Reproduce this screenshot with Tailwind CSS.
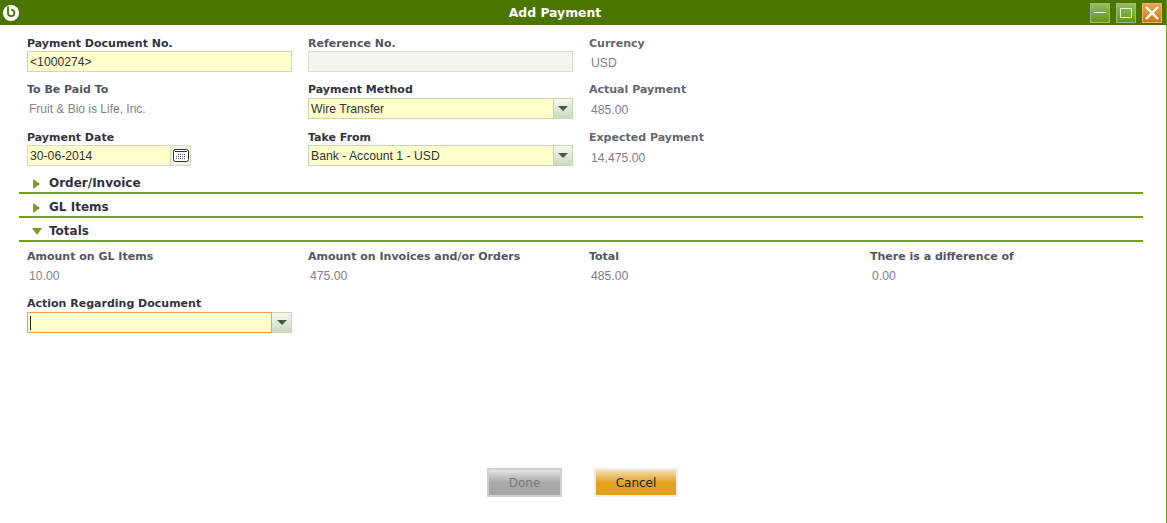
<!DOCTYPE html>
<html lang="en">
<head>
<meta charset="UTF-8">
<title>Add Payment</title>
<script src="https://cdn.jsdelivr.net/npm/@tailwindcss/browser@4"></script>
</head>
<body class="bg-white font-['Liberation_Sans',sans-serif] overflow-hidden">
<div class="w-[1167px] h-[523px] flex flex-col border-r border-[#6fa512]">
  <!-- title bar -->
  <div class="h-[25px] bg-[#4b7401] flex items-center pl-[3px] pr-[4px]">
    <svg width="16" height="16" viewBox="0 0 16 16" class="shrink-0">
      <circle cx="8" cy="8" r="8" fill="#fff"/>
      <path d="M5 1.5V8a3.2 3.2 0 1 0 3.2-3.2" fill="none" stroke="#4b7401" stroke-width="1.8"/>
    </svg>
    <div class="flex-1 text-center text-white font-['DejaVu_Sans',sans-serif] font-bold text-[12.4px] pl-[1px] pt-[2px]">Add Payment</div>
    <div class="flex gap-[6px]">
      <div class="w-[20px] h-[20px] border border-[#9db97a] bg-gradient-to-b from-[#93bd55] to-[#5f9a10] flex items-center justify-center">
        <div class="w-[12px] h-[1px] bg-white/90"></div>
      </div>
      <div class="w-[20px] h-[20px] border border-[#9db97a] bg-gradient-to-b from-[#93bd55] to-[#5f9a10] flex items-center justify-center">
        <div class="w-[12px] h-[10px] border border-white/80"></div>
      </div>
      <div class="w-[20px] h-[20px] border border-[#f0b25e] bg-gradient-to-b from-[#eda450] to-[#c9780f] flex items-center justify-center">
        <svg width="16" height="16" viewBox="0 0 16 16"><path d="M2 2l12 12M14 2L2 14" stroke="#fff" stroke-width="2.4" fill="none"/></svg>
      </div>
    </div>
  </div>

  <!-- form -->
  <div class="grid grid-cols-[281px_281px_281px] pl-[27px] pt-[12px] font-['DejaVu_Sans',sans-serif]">
    <div class="h-[46px]">
      <div class="text-[11px] leading-[13px] font-bold text-[#333340]">Payment Document No.</div>
      <div class="mt-[1px] w-[265px] h-[21px] bg-[#ffffcc] border border-[#d3d7b4] pl-[2px] text-[12.2px] leading-[21px] text-[#333] font-['Liberation_Sans',sans-serif]">&lt;1000274&gt;</div>
    </div>
    <div class="h-[46px]">
      <div class="text-[11px] leading-[13px] font-bold text-[#555560]">Reference No.</div>
      <div class="mt-[1px] w-[265px] h-[21px] bg-[#f3f5ee] border border-[#d5dccb]"></div>
    </div>
    <div class="h-[46px]">
      <div class="text-[11px] leading-[13px] font-bold text-[#666670]">Currency</div>
      <div class="mt-[6px] pl-[2px] text-[12.2px] leading-[14px] text-[#808088] font-['Liberation_Sans',sans-serif]">USD</div>
    </div>

    <div class="h-[48px]">
      <div class="text-[11px] leading-[13px] font-bold text-[#555560]">To Be Paid To</div>
      <div class="mt-[6px] pl-[2px] text-[12px] leading-[14px] text-[#808088] font-['Liberation_Sans',sans-serif]">Fruit &amp; Bio is Life, Inc.</div>
    </div>
    <div class="h-[48px]">
      <div class="text-[11px] leading-[13px] font-bold text-[#333340]">Payment Method</div>
      <div class="mt-[2px] w-[265px] h-[21px] flex bg-[#ffffcc] border border-[#c5dcaa]">
        <div class="flex-1 pl-[2px] text-[12.2px] leading-[21px] text-[#333] font-['Liberation_Sans',sans-serif]">Wire Transfer</div>
        <div class="w-[19px] border-l border-[#c5dcaa] bg-gradient-to-b from-[#f4f7ef] to-[#ccd9c1] flex items-center justify-center">
          <div class="w-0 h-0 border-x-[5px] border-x-transparent border-t-[5px] border-t-[#4a5a48]"></div>
        </div>
      </div>
    </div>
    <div class="h-[48px]">
      <div class="text-[11px] leading-[13px] font-bold text-[#666670]">Actual Payment</div>
      <div class="mt-[7px] pl-[2px] text-[12.2px] leading-[14px] text-[#808088] font-['Liberation_Sans',sans-serif]">485.00</div>
    </div>

    <div class="h-[39px]">
      <div class="text-[11px] leading-[13px] font-bold text-[#333340]">Payment Date</div>
      <div class="mt-[1px] flex h-[21px] w-[164px]">
        <div class="w-[144px] bg-[#ffffcc] border border-[#d3ddb8] pl-[2px] text-[12.2px] leading-[21px] text-[#333] font-['Liberation_Sans',sans-serif]">30-06-2014</div>
        <div class="w-[20px] border border-l-0 border-[#d3ddc2] bg-[#eef2e8] flex items-center justify-center">
          <svg width="16" height="13" viewBox="0 0 16 13">
            <rect x=".5" y=".5" width="15" height="12" rx="2" fill="#fff" stroke="#333"/>
            <path d="M2 2.5h12" stroke="#333"/>
            <path d="M5 5.5h8M3 7.5h10M3 9.5h10" stroke="#555" stroke-dasharray="1 1"/>
          </svg>
        </div>
      </div>
    </div>
    <div class="h-[39px]">
      <div class="text-[11px] leading-[13px] font-bold text-[#333340]">Take From</div>
      <div class="mt-[1px] w-[265px] h-[21px] flex bg-[#ffffcc] border border-[#c5dcaa]">
        <div class="flex-1 pl-[2px] text-[12.2px] leading-[21px] text-[#333] font-['Liberation_Sans',sans-serif]">Bank - Account 1 - USD</div>
        <div class="w-[19px] border-l border-[#c5dcaa] bg-gradient-to-b from-[#f4f7ef] to-[#ccd9c1] flex items-center justify-center">
          <div class="w-0 h-0 border-x-[5px] border-x-transparent border-t-[5px] border-t-[#4a5a48]"></div>
        </div>
      </div>
    </div>
    <div class="h-[39px]">
      <div class="text-[11px] leading-[13px] font-bold text-[#666670]">Expected Payment</div>
      <div class="mt-[7px] pl-[2px] text-[12.2px] leading-[14px] text-[#808088] font-['Liberation_Sans',sans-serif]">14,475.00</div>
    </div>
  </div>

  <!-- collapsible sections -->
  <div class="ml-[19px] w-[1124px] font-['DejaVu_Sans',sans-serif]">
    <div class="h-[24px] border-b-2 border-[#6fa512] flex items-center gap-[9px] pl-[14px] pt-[4px]">
      <div class="w-0 h-0 border-y-[5.5px] border-y-transparent border-l-[7px] border-l-[#6fa512] mt-[1px]"></div>
      <span class="text-[12px] font-bold text-[#333340]">Order/Invoice</span>
    </div>
    <div class="h-[24px] border-b-2 border-[#6fa512] flex items-center gap-[9px] pl-[14px] pt-[4px]">
      <div class="w-0 h-0 border-y-[5.5px] border-y-transparent border-l-[7px] border-l-[#6fa512] mt-[1px]"></div>
      <span class="text-[12px] font-bold text-[#333340]">GL Items</span>
    </div>
    <div class="h-[24px] border-b-2 border-[#6fa512] flex items-center gap-[7px] pl-[13px] pt-[4px]">
      <div class="w-0 h-0 border-x-[5.5px] border-x-transparent border-t-[7px] border-t-[#6fa512] mt-[1px]"></div>
      <span class="text-[12px] font-bold text-[#333340]">Totals</span>
    </div>
  </div>

  <!-- totals -->
  <div class="grid grid-cols-[281px_281px_281px_281px] pl-[27px] pt-[8px] font-['DejaVu_Sans',sans-serif]">
    <div class="h-[47px]">
      <div class="text-[11px] leading-[13px] font-bold text-[#555560]">Amount on GL Items</div>
      <div class="mt-[6px] pl-[2px] text-[12.2px] leading-[14px] text-[#808088] font-['Liberation_Sans',sans-serif]">10.00</div>
    </div>
    <div class="h-[47px]">
      <div class="text-[11px] leading-[13px] font-bold text-[#555560]">Amount on Invoices and/or Orders</div>
      <div class="mt-[6px] pl-[2px] text-[12.2px] leading-[14px] text-[#808088] font-['Liberation_Sans',sans-serif]">475.00</div>
    </div>
    <div class="h-[47px]">
      <div class="text-[11px] leading-[13px] font-bold text-[#555560]">Total</div>
      <div class="mt-[6px] pl-[2px] text-[12.2px] leading-[14px] text-[#808088] font-['Liberation_Sans',sans-serif]">485.00</div>
    </div>
    <div class="h-[47px]">
      <div class="text-[11px] leading-[13px] font-bold text-[#555560]">There is a difference of</div>
      <div class="mt-[6px] pl-[2px] text-[12.2px] leading-[14px] text-[#808088] font-['Liberation_Sans',sans-serif]">0.00</div>
    </div>
    <div class="col-span-4">
      <div class="text-[11px] leading-[13px] font-bold text-[#333340]">Action Regarding Document</div>
      <div class="mt-[2px] w-[265px] h-[21px] flex">
        <div class="flex-1 bg-[#ffffcc] border border-[#f0a040] pl-[2px] flex items-center">
          <div class="w-[1px] h-[14px] bg-[#222]"></div>
        </div>
        <div class="w-[20px] border border-l-0 border-[#c5dcaa] bg-gradient-to-b from-[#f4f7ef] to-[#ccd9c1] flex items-center justify-center">
          <div class="w-0 h-0 border-x-[5px] border-x-transparent border-t-[5px] border-t-[#4a5a48]"></div>
        </div>
      </div>
    </div>
  </div>

  <!-- buttons -->
  <div class="mt-[135px] flex justify-center gap-[32px] pr-[1px] font-['DejaVu_Sans',sans-serif] text-[12px]">
    <div class="w-[75px] h-[29px] border-[2px] border-[#d0d0cc] bg-gradient-to-b from-[#e4e4e4] via-[#aaaaaa] to-[#a6a6a6] text-[#7a7a7a] flex items-center justify-center">Done</div>
    <div class="w-[84px] h-[29px] border-[2px] border-[#eeeeee] bg-gradient-to-b from-[#f2e0a8] via-[#e2a11c] to-[#e2a11c] text-[#222] flex items-center justify-center">Cancel</div>
  </div>
</div>
</body>
</html>
